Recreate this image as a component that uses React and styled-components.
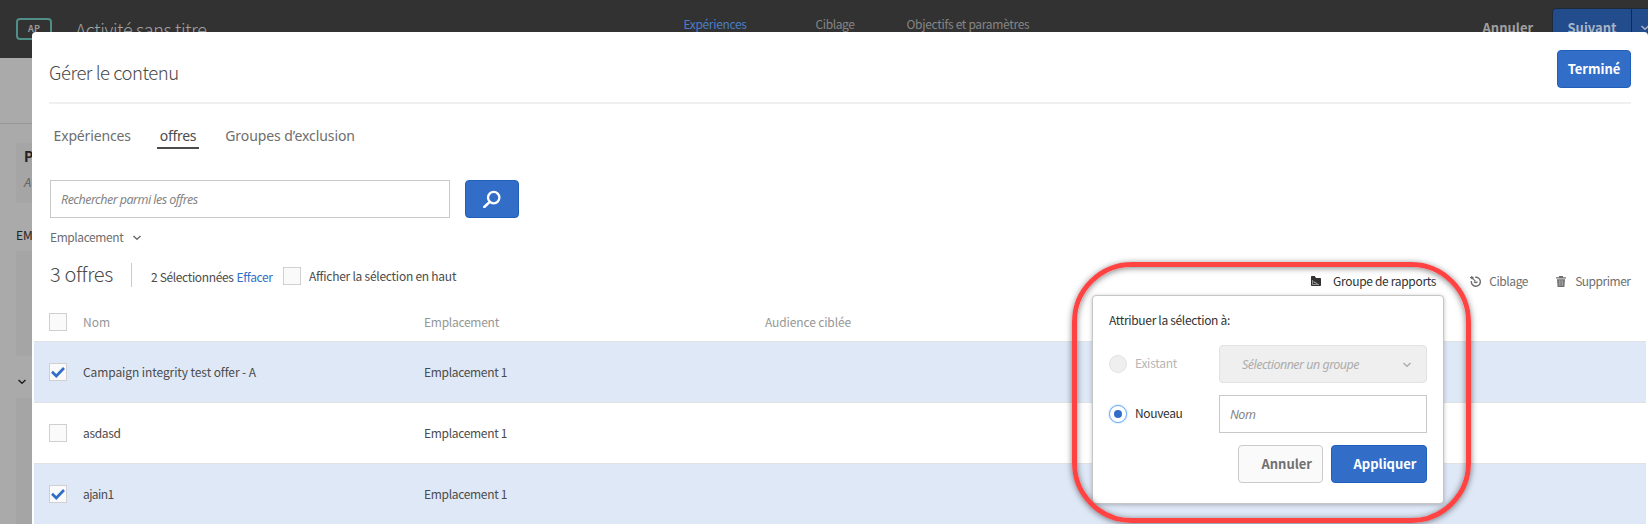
import React from 'react';
import styled, { createGlobalStyle, css } from 'styled-components';

const GlobalStyle = createGlobalStyle`
  * { box-sizing: border-box; }
  body {
    margin: 0;
    overflow: hidden;
    background: #aaaaaa;
    color: #4b4b4b;
    font-family: "Noto Sans CJK SC", "Noto Sans", sans-serif;
    font-size: 12px;
    line-height: 18px;
  }
`;

const Page = styled.div`
  position: relative;
  width: 1648px;
  height: 524px;
  overflow: hidden;
`;

const Text = styled.span`
  white-space: nowrap;
  letter-spacing: ${p => p.$ls || 0}px;
`;

/* Dimmed editor behind the dialog */
const TopBar = styled.header`
  display: flex;
  align-items: center;
  height: 58px;
  background: #323232;
  & > * { flex: none; }
`;
const Badge = styled.div`
  width: 36px;
  height: 22px;
  margin-left: 16px;
  border: 2px solid #4f8f87;
  border-radius: 4px;
  color: #999;
  font-size: 9px;
  font-weight: 700;
  line-height: 17px;
  text-align: center;
`;
const ActivityTitle = styled(Text)`
  width: 608px;
  margin-left: 23.5px;
  color: #a0a0a0;
  font-size: 18px;
  font-weight: 300;
  line-height: 28px;
`;
const Steps = styled.nav`
  display: flex;
  width: 799px;
  padding-bottom: 10px;
`;
const Step = styled(Text)`
  width: ${p => p.$w}px;
  color: ${p => (p.$active ? '#4a7dc9' : '#858585')};
`;
const BarCancel = styled(Text)`
  width: 69px;
  padding-bottom: 2px;
  color: #a0a0a0;
  font-size: 13px;
  font-weight: 700;
`;
const BarButton = styled.div`
  display: flex;
  align-items: center;
  width: ${p => p.$w}px;
  height: 42px;
  padding: 0 0 2px ${p => p.$pad}px;
  border: 1px solid #1d2838;
  border-left-width: ${p => (p.$split ? 0 : 1)}px;
  border-radius: ${p => (p.$split ? '0' : '4px 0 0 4px')};
  background: #224c8c;
  color: #a9b4c6;
  font-size: 13px;
  font-weight: 700;
`;
const Side = styled.aside`
  display: flex;
  flex-direction: column;
  width: 32px;
  color: #222;
`;
const SideHeader = styled.div`
  height: 66px;
  border-bottom: 1px solid #979797;
`;
const SideCard = styled.div`
  height: ${p => p.$h}px;
  margin: ${p => p.$top}px 0 0 16px;
  padding: 3px 0 0 8px;
  background: #a5a5a5;
`;
const CardTitle = styled.div`
  font-size: 14px;
  font-weight: 700;
  line-height: 20px;
`;
const CardNote = styled.div`
  margin-top: 7px;
  color: #666;
  font-family: "Noto Sans", sans-serif;
  font-size: 13px;
  font-style: italic;
`;
const SideLabel = styled.div`
  height: 18px;
  margin: 23px 0 0 16px;
`;
const SideToggle = styled.div`
  display: flex;
  align-items: center;
  height: 20px;
  margin: 16px 0 0 17px;
`;

/* Dialog */
const Dialog = styled.section`
  position: absolute;
  top: 32px;
  left: 32px;
  width: 1616px;
  height: 492px;
  border-radius: 4px 4px 0 0;
  background: #fff;
`;
const DialogHeader = styled.div`
  display: flex;
  align-items: flex-start;
  justify-content: space-between;
  height: 72px;
  margin: 0 17px;
  padding-top: 18px;
  border-bottom: 2px solid #f0f0f0;
`;
const DialogTitle = styled(Text)`
  padding-top: 8px;
  font-size: 18.5px;
  font-weight: 300;
  line-height: 28px;
`;
const Button = styled.button`
  display: flex;
  align-items: center;
  justify-content: ${p => p.$justify || 'center'};
  width: ${p => p.$w}px;
  height: 38px;
  padding: 0 ${p => p.$pad || 0}px 2px;
  border: 1px solid ${p => (p.$plain ? '#cbcbcb' : '#205fba')};
  border-radius: 4px;
  background: ${p => (p.$plain ? '#fafafa' : '#326ec8')};
  color: ${p => (p.$plain ? '#707070' : '#fff')};
  font-family: inherit;
  font-size: 13px;
  font-weight: 700;
`;
const Tabs = styled.div`
  display: flex;
  gap: 23px;
  height: 46px;
  margin-top: 23px;
  padding-left: 18.5px;
`;
const Tab = styled(Text)`
  height: 22px;
  padding: 0 3px;
  border-bottom: 2px solid ${p => (p.$active ? '#4b4b4b' : 'transparent')};
  color: ${p => (p.$active ? '#4b4b4b' : '#6e6e6e')};
  font-family: "Noto Sans", sans-serif;
  font-size: 14px;
  line-height: 17px;
`;
const SearchRow = styled.div`
  display: flex;
  gap: 15px;
  margin-top: 7px;
  padding-left: 18px;
`;
const Field = styled.div`
  display: flex;
  align-items: center;
  width: ${p => p.$w}px;
  height: 38px;
  padding: 1px 10px 0;
  border: 1px solid #c9c9c9;
  background: #fff;
  color: #858585;
  font-family: "Noto Sans", sans-serif;
  font-size: 12.5px;
  font-style: italic;
  ${p => p.$select && css`
    justify-content: space-between;
    padding: 1px 14px 0 22px;
    border-color: #e2e2e2;
    border-radius: 4px;
    background: #efefef;
    color: #adadad;
  `}
`;
const Filter = styled.div`
  display: flex;
  align-items: center;
  gap: 9px;
  height: 20px;
  margin-top: 9px;
  padding-left: 18px;
  color: #6e6e6e;
  svg { margin-top: 2px; }
`;
const Summary = styled.div`
  display: flex;
  align-items: center;
  height: 38px;
  margin: 10px 0 9px;
  padding: 0 17.5px 0 18px;
`;
const Count = styled(Text)`
  width: 81px;
  padding-bottom: 4px;
  font-size: 20px;
  font-weight: 300;
  line-height: 28px;
`;
const Divider = styled.span`
  width: 1px;
  height: 24px;
  margin: 0 19px 3px 0;
  background: #cbcbcb;
`;
const Selected = styled.div`
  display: flex;
  gap: 3px;
  width: 132px;
  padding-top: 2px;
`;
const Link = styled(Text)`
  color: #326ec8;
`;
const SortLabel = styled(Text)`
  margin-left: 8px;
`;
const Actions = styled.div`
  display: flex;
  margin-left: auto;
  padding-top: 10px;
`;
const Action = styled.div`
  display: flex;
  align-items: center;
  gap: ${p => p.$gap}px;
  margin-left: ${p => p.$left || 0}px;
  color: ${p => (p.$active ? '#323232' : '#6e6e6e')};
`;
const CheckboxBox = styled.span`
  display: flex;
  flex: none;
  align-items: center;
  justify-content: center;
  width: 18px;
  height: 18px;
  border: 1px solid #d0d0d0;
  background: #fafafa;
`;
const Row = styled.div`
  display: grid;
  grid-template-columns: 34px 341px 341px 1fr;
  align-items: center;
  height: ${p => (p.$head ? 37 : 61)}px;
  margin: 0 2px;
  padding: 0 0 ${p => (p.$head ? 1 : 0)}px 15px;
  border-top: ${p => (p.$head ? 0 : 1)}px solid #e1e2e5;
  background: ${p => (p.$selected ? '#dfe8f7' : '#fff')};
  color: ${p => (p.$head ? '#969696' : '#4b4b4b')};
`;

/* Report group popover */
const Popover = styled.div`
  position: absolute;
  top: 295px;
  left: 1092px;
  width: 352px;
  height: 209px;
  padding: 15px 16px 0;
  border: 1px solid #c6c6c6;
  border-radius: 4px;
  background: #fff;
  box-shadow: 0 1px 4px rgba(0, 0, 0, 0.25);
  color: #323232;
`;
const Option = styled.div`
  display: flex;
  align-items: center;
  height: 38px;
  margin-top: ${p => p.$top}px;
  color: ${p => (p.$off ? '#b6b6b6' : '#323232')};
`;
const OptionLabel = styled(Text)`
  width: 84px;
  margin-left: 8px;
  padding-bottom: 2px;
`;
const Radio = styled.span`
  display: flex;
  align-items: center;
  justify-content: center;
  width: 18px;
  height: 18px;
  border: 1px solid ${p => (p.$on ? '#6fadf8' : '#e2e2e2')};
  border-radius: 50%;
  background: ${p => (p.$on ? '#fff' : '#efefef')};
  box-shadow: ${p => (p.$on ? '0 0 2px #8fc0fa' : 'none')};
  &::after {
    content: "";
    width: 8px;
    height: 8px;
    border-radius: 50%;
    background: ${p => (p.$on ? '#326ec8' : 'transparent')};
  }
`;
const Buttons = styled.div`
  display: flex;
  justify-content: flex-end;
  gap: 8px;
  margin-top: 12px;
`;
const Highlight = styled.div`
  position: absolute;
  top: 262px;
  left: 1072px;
  width: 399px;
  height: 261px;
  border: 5px solid #ff4343;
  border-radius: 60px;
  box-shadow: 0 1px 6px rgba(0, 0, 0, 0.5), inset 0 1px 6px rgba(0, 0, 0, 0.5);
`;

const Chevron = () => (
  <svg width="10" height="6" viewBox="0 0 10 6" fill="none" stroke="currentColor" strokeWidth="1.5">
    <path d="M1.5 1 5 4.3 8.5 1" />
  </svg>
);
const SearchIcon = () => (
  <svg width="20" height="20" viewBox="0 0 20 20" fill="none" stroke="#fff">
    <circle cx="11.7" cy="9.6" r="5.7" strokeWidth="2.3" />
    <path d="M7.7 13.8 2.3 19" strokeWidth="2.5" strokeLinecap="round" />
  </svg>
);
const FolderIcon = () => (
  <svg width="10" height="10" viewBox="0 0 10 10">
    <path d="M0 .8Q0 0 .8 0h3l1.2 2h4.2q.8 0 .8.8v6.4q0 .8-.8.8H.8Q0 10 0 9.2z" fill="#323232" />
    <path d="M1.5 4v4.5h6.5M3 5v1.5h2v1h1.5" fill="none" stroke="#aaa" strokeWidth=".8" />
  </svg>
);
const TargetIcon = () => (
  <svg width="11" height="11" viewBox="0 0 11 11" fill="none" stroke="#6e6e6e">
    <path d="M5.2 1.3A4.5 4.5 0 1 1 1.4 5" strokeWidth="1.4" />
    <path d="M4 5.6A2 2 0 0 0 7.4 5.6" strokeWidth="1.2" />
    <path d="M0 1.6h3.6M1.8 0v3.2M2 1.8 5.6 5.4" strokeWidth="1.2" />
  </svg>
);
const TrashIcon = () => (
  <svg width="10" height="11" viewBox="0 0 10 11" fill="#6e6e6e">
    <path d="M0 1.2h3V0h4v1.2h3v1.3H0zM1 3.2h8L8.4 11H1.6z" />
    <path d="M3.3 4.2v5.6M5 4.2v5.6M6.7 4.2v5.6" stroke="#ccc" strokeWidth=".6" />
  </svg>
);
const Checkbox = ({ checked }) => (
  <CheckboxBox>
    {checked && (
      <svg width="16" height="16" viewBox="0 0 16 16" fill="none" stroke="#326ec8" strokeWidth="2.7">
        <path d="M2 7.7 6.3 12 14 4" />
      </svg>
    )}
  </CheckboxBox>
);

const offers = [
  { name: 'Campaign integrity test offer - A', spacing: -0.09, checked: true },
  { name: 'asdasd', spacing: -0.35 },
  { name: 'ajain1', spacing: -0.6, checked: true },
];

export default function App() {
  return (
    <Page>
      <GlobalStyle />
      <TopBar>
        <Badge>AP</Badge>
        <ActivityTitle $ls={-0.34}>Activité sans titre</ActivityTitle>
        <Steps>
          <Step $active $w={132} $ls={-0.34}>Expériences</Step>
          <Step $w={91} $ls={-0.4}>Ciblage</Step>
          <Step $ls={-0.31}>Objectifs et paramètres</Step>
        </Steps>
        <BarCancel>Annuler</BarCancel>
        <BarButton $w={80} $pad={15}>Suivant</BarButton>
        <BarButton $split $w={60} $pad={8}><Chevron /></BarButton>
      </TopBar>
      <Side>
        <SideHeader />
        <SideCard $h={60} $top={19}>
          <CardTitle>P</CardTitle>
          <CardNote>A</CardNote>
        </SideCard>
        <SideLabel>EM</SideLabel>
        <SideCard $h={105} $top={7} />
        <SideToggle><Chevron /></SideToggle>
        <SideCard $h={126} $top={6} />
      </Side>

      <Dialog>
        <DialogHeader>
          <DialogTitle $ls={-0.48}>Gérer le contenu</DialogTitle>
          <Button $w={74}>Terminé</Button>
        </DialogHeader>
        <Tabs>
          <Tab $ls={-0.15}>Expériences</Tab>
          <Tab $active $ls={-0.3}>offres</Tab>
          <Tab $ls={-0.07}>Groupes d’exclusion</Tab>
        </Tabs>
        <SearchRow>
          <Field $w={400}><Text $ls={-0.53}>Rechercher parmi les offres</Text></Field>
          <Button $w={54}><SearchIcon /></Button>
        </SearchRow>
        <Filter><Text $ls={-0.42}>Emplacement</Text><Chevron /></Filter>
        <Summary>
          <Count $ls={-0.35}>3 offres</Count>
          <Divider />
          <Selected>
            <Text $ls={-0.35}>2 Sélectionnées</Text>
            <Link $ls={-0.35}>Effacer</Link>
          </Selected>
          <Checkbox />
          <SortLabel $ls={-0.25}>Afficher la sélection en haut</SortLabel>
          <Actions>
            <Action $active $gap={12}><FolderIcon /><Text $ls={-0.32}>Groupe de rapports</Text></Action>
            <Action $gap={8} $left={34}><TargetIcon /><Text $ls={-0.4}>Ciblage</Text></Action>
            <Action $gap={9} $left={28}><TrashIcon /><Text $ls={-0.48}>Supprimer</Text></Action>
          </Actions>
        </Summary>
        <Row $head>
          <Checkbox />
          <Text>Nom</Text>
          <Text $ls={-0.27}>Emplacement</Text>
          <Text $ls={-0.13}>Audience ciblée</Text>
        </Row>
        {offers.map(o => (
          <Row key={o.name} $selected={o.checked}>
            <Checkbox checked={o.checked} />
            <Text $ls={o.spacing}>{o.name}</Text>
            <Text $ls={-0.32}>Emplacement 1</Text>
          </Row>
        ))}
      </Dialog>

      <Popover>
        <Text $ls={-0.32}>Attribuer la sélection à:</Text>
        <Option $off $top={16}>
          <Radio />
          <OptionLabel $ls={-0.27}>Existant</OptionLabel>
          <Field $select $w={208}><Text $ls={-0.52}>Sélectionner un groupe</Text><Chevron /></Field>
        </Option>
        <Option $top={12}>
          <Radio $on />
          <OptionLabel $ls={-0.35}>Nouveau</OptionLabel>
          <Field $w={208}><Text $ls={-0.5}>Nom</Text></Field>
        </Option>
        <Buttons>
          <Button $plain $w={85} $justify="flex-end" $pad={10}>Annuler</Button>
          <Button $w={96} $justify="flex-end" $pad={9.5}>Appliquer</Button>
        </Buttons>
      </Popover>
      <Highlight />
    </Page>
  );
}
